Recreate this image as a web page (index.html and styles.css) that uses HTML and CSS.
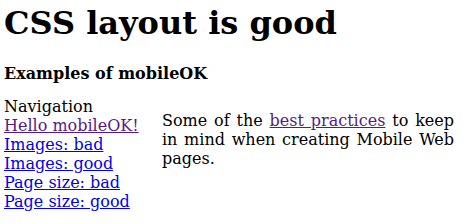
FILE: index.html
```html
<!DOCTYPE html>
<html>
<head>
<meta charset="utf-8">
<link rel="stylesheet" href="styles.css">
</head>
<body>
<h1 class="title">CSS layout is good</h1>
<h3 class="subtitle">Examples of mobileOK</h3>
<div class="layout">
  <div class="nav">
    <div class="nav-head">Navigation</div>
    <a class="visited" href="#">Hello mobileOK!</a>
    <a href="#">Images: bad</a>
    <a href="#">Images: good</a>
    <a href="#">Page size: bad</a>
    <a href="#">Page size: good</a>
  </div>
  <div class="content">
    <p>Some of the <a class="visited" href="#">best practices</a> to keep in mind when creating Mobile Web pages.</p>
  </div>
</div>
</body>
</html>
```
FILE: styles.css
```css
html, body { background: #fff; }
body {
  margin: 4px;
  font-family: "DejaVu Serif", serif;
  font-size: 16px;
  color: #000;
}
.title {
  font-size: 32px;
  font-weight: bold;
  margin: 0;
}
.subtitle {
  font-size: 16px;
  font-weight: bold;
  margin: 22px 0 14px;
}
.layout {
  display: grid;
  grid-template-columns: 158px 292px;
}
.nav {
  display: flex;
  flex-direction: column;
  align-items: flex-start;
}
a { color: #0000ee; }
a.visited { color: #551a8b; }
.content p {
  margin: 14px 0 0;
  text-align: justify;
}
```
